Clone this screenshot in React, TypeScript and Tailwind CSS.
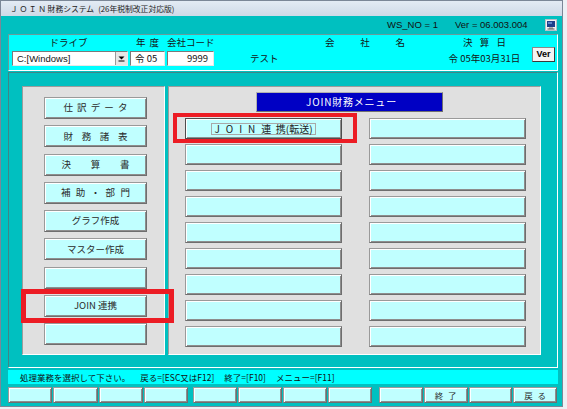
import React from 'react';

// Win-classic style raised cell used for every menu / function key button
const cellBtn =
  'bg-[#c0ffff] border border-[#9a9a9a] border-r-[#6e6e6e] border-b-[#6e6e6e] shadow-[inset_1px_1px_0_#ffffff,inset_-1px_-1px_0_#8e8e8e] flex items-center justify-center text-[#2a2a2a]';

const sunken = 'border border-t-[#7a7a7a] border-l-[#7a7a7a] border-b-[#e8e8e8] border-r-[#e8e8e8]';

const Spread: React.FC<{ text: string; className: string }> = ({ text, className }) => (
  <span className={`flex justify-between ${className}`}>
    {text.split('').map((c, i) => (
      <span key={i}>{c}</span>
    ))}
  </span>
);

type LeftItem = { label?: string; spread?: string };

const leftItems: LeftItem[] = [
  { label: '仕訳データ', spread: 'w-[64px]' },
  { label: '財務諸表', spread: 'w-[64px]' },
  { label: '決算書', spread: 'w-[68px]' },
  { label: '補助・部門', spread: 'w-[69px]' },
  { label: 'グラフ作成' },
  { label: 'マスター作成' },
  {},
  { label: 'JOIN 連携' },
  {},
];

const MonitorIcon = () => (
  <svg width="12" height="12" viewBox="0 0 12 12">
    <rect x="0.5" y="0.5" width="11" height="11" fill="#f2f2f2" stroke="#b8c0c8" />
    <rect x="2" y="2" width="8" height="6" fill="#1d3f8a" />
    <rect x="3" y="3" width="4" height="2" fill="#5b84c8" />
    <rect x="4" y="8.5" width="4" height="1" fill="#707070" />
    <rect x="2.5" y="9.5" width="7" height="1" fill="#505050" />
  </svg>
);

const ArrowDown = () => (
  <svg width="7" height="6" viewBox="0 0 7 6">
    <path d="M0.5 0.5 L6.5 0.5 L3.5 3.5 Z" fill="#000" />
    <rect x="0.5" y="4.5" width="6" height="1" fill="#000" />
  </svg>
);

export default function App() {
  return (
    <div className="relative w-[567px] h-[409px] bg-[#edf1f5] font-[family-name:'Noto_Sans_CJK_JP','Noto_Sans',sans-serif] overflow-hidden">
      <div className="w-[563px] h-[407px] border border-[#7b8797] bg-[#00c0c0] flex flex-col">
        {/* title bar */}
        <div className="h-[15px] bg-linear-to-b from-[#e3ebf4] to-[#cfdae7] flex items-center pl-[9px] text-[7.8px] text-[#1c1c1c] leading-none whitespace-nowrap">
          <span className="tracking-[1.6px]">ＪＯＩＮ</span>
          <span>財務システム</span>
          <span className="ml-[4px]">(26年税制改正対応版)</span>
        </div>

        <div className="flex flex-col pl-[7px]">
          {/* ws / version row */}
          <div className="h-[18px] flex items-center text-[9.5px] text-[#101010] leading-none font-[family-name:'Liberation_Sans',sans-serif]">
            <span className="ml-[379px] w-[68px]">WS_NO = 1</span>
            <span className="w-[90px]">Ver = 06.003.004</span>
            <MonitorIcon />
          </div>

          {/* company header panel */}
          <div className="w-[550px] h-[37px] bg-[#00ffff] border border-t-[#6a9c9c] border-l-[#6a9c9c] border-b-white border-r-white flex pl-[3px] pt-[1px] text-[9.5px] leading-none text-[#141414] whitespace-nowrap">
            <div className="w-[116px] flex flex-col">
              <div className="h-[14px] flex items-center justify-center pr-[3px]">ドライブ</div>
              <div className={`mt-[1px] h-[15px] bg-white ${sunken} flex items-center`}>
                <span className="flex-1 pl-[4px] font-[family-name:'Liberation_Sans',sans-serif]">C:[Windows]</span>
                <span className="w-[12px] h-full bg-[#e6e6e6] border-l border-[#9a9a9a] flex items-center justify-center">
                  <ArrowDown />
                </span>
              </div>
            </div>
            <div className="ml-[2px] w-[35px] flex flex-col">
              <div className="h-[14px] flex items-center justify-center">
                <Spread text="年度" className="w-[23px]" />
              </div>
              <div className={`mt-[1px] h-[15px] bg-white ${sunken} flex items-center pl-[4px]`}>令 05</div>
            </div>
            <div className="ml-[2px] w-[47px] flex flex-col">
              <div className="h-[14px] flex items-center">会社コード</div>
              <div className={`mt-[1px] h-[15px] bg-white ${sunken} flex items-center justify-end pr-[5px]`}>9999</div>
            </div>
            <div className="ml-[36px] w-[75px] flex flex-col">
              <div className="h-[14px]" />
              <div className="mt-[1px] h-[15px] flex items-center">テスト</div>
            </div>
            <div className="w-[80px] flex flex-col">
              <div className="h-[14px] flex items-center">
                <Spread text="会社名" className="w-[80px]" />
              </div>
            </div>
            <div className="ml-[41px] w-[77px] flex flex-col">
              <div className="h-[14px] flex items-center justify-center">
                <Spread text="決算日" className="w-[43px]" />
              </div>
              <div className="mt-[1px] h-[15px] flex items-center justify-center">令 05年03月31日</div>
            </div>
            <div className="ml-[9px] mt-[11px] w-[23px] h-[15px] bg-[#f4f4f4] border border-[#8a8a8a] border-r-[#3a3a3a] border-b-[#3a3a3a] flex items-center justify-center text-[9px] font-bold text-black font-[family-name:'Liberation_Sans',sans-serif]">
              Ver
            </div>
          </div>

          {/* main menu frame */}
          <div className="mt-[1px] w-[550px] h-[296px] border border-t-[#3f8686] border-l-[#3f8686] border-b-white border-r-white flex pl-[13px] pt-[13px]">
            {/* left menu */}
            <div className="w-[143px] h-[269px] bg-[#e0e0e0] border border-t-[#9c9c9c] border-l-[#9c9c9c] border-b-white border-r-white flex flex-col gap-[6.25px] pl-[21px] pt-[10px]">
              {leftItems.map((it, i) => (
                <div key={i} className={`w-[103px] h-[22px] ${cellBtn} text-[9.5px] leading-none`}>
                  {it.label && (it.spread ? <Spread text={it.label} className={it.spread} /> : <span>{it.label}</span>)}
                </div>
              ))}
            </div>

            {/* right menu */}
            <div className="ml-[3px] w-[373px] h-[269px] bg-[#e0e0e0] border border-t-[#9c9c9c] border-l-[#9c9c9c] border-b-white border-r-white flex flex-col">
              <div className="ml-[87px] mt-[5px] w-[187px] h-[20px] bg-[#0000c4] border border-[#b0b0b0] border-r-[#707070] border-b-[#707070] flex items-center justify-center text-white text-[10px] tracking-[0.8px] leading-none pl-[4px]">
                JOIN財務メニュー
              </div>
              <div className="ml-[16px] mt-[6px] grid grid-cols-[157px_157px] gap-x-[27px] gap-y-[5px]">
                {Array.from({ length: 18 }).map((_, i) => {
                  const col = i % 2;
                  const row = Math.floor(i / 2);
                  if (row === 0 && col === 0) {
                    return (
                      <div
                        key={i}
                        className="h-[21px] bg-[#c0ffff] border border-[#4e4e4e] shadow-[inset_1px_1px_0_#ffffff,inset_-1px_-1px_0_#8e8e8e] flex items-center justify-center text-[10px] text-[#222] leading-none"
                      >
                        <span className="border border-[#a8a8a8] px-[2px] h-[12px] flex items-center">
                          <span className="tracking-[6px]">JOIN</span>
                          <span className="tracking-[4.5px]">連</span>
                          <span>携(転送)</span>
                        </span>
                      </div>
                    );
                  }
                  return <div key={i} className={`h-[21px] ${cellBtn}`} />;
                })}
              </div>
            </div>
          </div>

          {/* status bar */}
          <div className="mt-[2px] w-[550px] h-[14px] bg-[#00ffff] flex items-center pl-[12px] text-[8.5px] leading-none text-[#101010] whitespace-nowrap">
            <span>処理業務を選択して下さい。</span>
            <span className="ml-[10px]">戻る=[ESC又はF12]</span>
            <span className="ml-[10px]">終了=[F10]</span>
            <span className="ml-[10px]">メニュー=[F11]</span>
          </div>

          {/* function keys */}
          <div className="mt-[3px] h-[16px] flex text-[8.5px] leading-none">
            <div className="w-[180px] flex gap-[1px]">
              {[0, 1, 2, 3].map((k) => (
                <div key={k} className={`flex-1 ${cellBtn}`} />
              ))}
            </div>
            <div className="ml-[5px] w-[179px] flex gap-[1px]">
              {[0, 1, 2, 3].map((k) => (
                <div key={k} className={`flex-1 ${cellBtn}`} />
              ))}
            </div>
            <div className="ml-[7px] w-[178px] flex gap-[1px]">
              <div className={`flex-1 ${cellBtn}`} />
              <div className={`flex-1 ${cellBtn}`}>
                <Spread text="終了" className="w-[22px]" />
              </div>
              <div className={`flex-1 ${cellBtn}`} />
              <div className={`flex-1 ${cellBtn}`}>
                <Spread text="戻る" className="w-[22px]" />
              </div>
            </div>
          </div>
        </div>
      </div>

      {/* red annotation boxes */}
      <div className="absolute left-[21px] top-[289px] w-[153px] h-[34px] border-[5px] border-[#ec1c24]" />
      <div className="absolute left-[173px] top-[113px] w-[184px] h-[30px] border-[4.5px] border-[#ec1c24]" />
    </div>
  );
}
